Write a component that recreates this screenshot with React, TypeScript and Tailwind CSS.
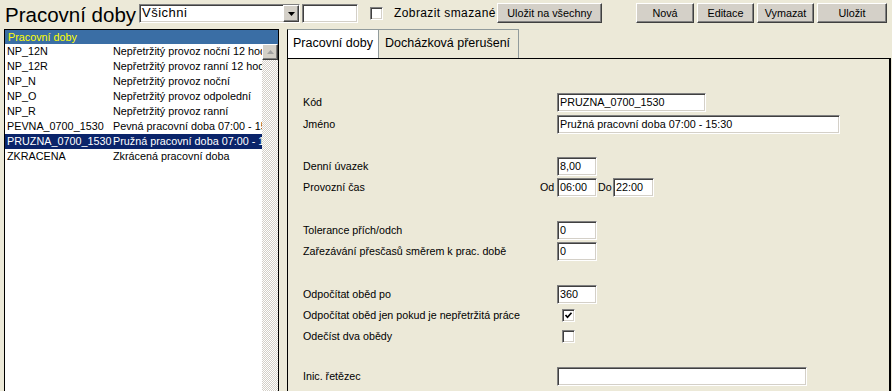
import React from "react";

const sunken =
  "border border-t-[#808080] border-l-[#808080] border-r-white border-b-white shadow-[inset_1px_1px_0_#404040,inset_-1px_-1px_0_#d4d0c8] bg-white";
const raised =
  "border border-t-white border-l-white border-r-[#404040] border-b-[#404040] shadow-[inset_-1px_-1px_0_#808080] bg-[#d4d0c8]";

function Input({ w, value = "", h = "h-[19px]" }: { w: string; value?: string; h?: string }) {
  return (
    <div className={`${sunken} ${w} ${h} pl-[2px] text-[10.8px] leading-[16px] whitespace-nowrap overflow-hidden text-black`}>
      {value}
    </div>
  );
}

function Check({ checked }: { checked?: boolean }) {
  return (
    <div className={`${sunken} w-[13px] h-[13px] flex items-center justify-center`}>
      {checked && (
        <svg width="9" height="9" viewBox="0 0 9 9">
          <polyline points="1.5,4 3.5,6.2 7.5,1.8" fill="none" stroke="#000" strokeWidth="1.7" />
        </svg>
      )}
    </div>
  );
}

function Btn({ w, label }: { w: string; label: string }) {
  return (
    <div className={`${raised} ${w} h-[20px] mt-[3px] flex items-center justify-center text-[10.8px] text-black whitespace-nowrap`}>
      {label}
    </div>
  );
}

const rows: [string, string][] = [
  ["NP_12N", "Nepřetržitý provoz noční 12 hodin"],
  ["NP_12R", "Nepřetržitý provoz ranní 12 hodin"],
  ["NP_N", "Nepřetržitý provoz noční"],
  ["NP_O", "Nepřetržitý provoz odpolední"],
  ["NP_R", "Nepřetržitý provoz ranní"],
  ["PEVNA_0700_1530", "Pevná pracovní doba 07:00 - 15:30"],
  ["PRUZNA_0700_1530", "Pružná pracovní doba 07:00 - 15:30"],
  ["ZKRACENA", "Zkrácená pracovní doba"],
];

function Row({ label, children, className = "" }: { label: string; children?: React.ReactNode; className?: string }) {
  return (
    <div className={`flex items-center h-[21px] ${className}`}>
      <div className="w-[254px] text-[10.7px] whitespace-nowrap">{label}</div>
      {children}
    </div>
  );
}

export default function App() {
  return (
    <div className="w-[892px] h-[391px] bg-[#ECE9D8] overflow-hidden font-['Liberation_Sans',Arial,sans-serif] text-black">
      {/* top bar */}
      <div className="flex items-start h-[29px]">
        <div className="ml-[5px] mt-[5px] w-[134px] text-[20.5px] leading-none whitespace-nowrap">Pracovní doby</div>
        <div className={`${sunken} w-[161px] h-[19px] mt-[4px] flex items-stretch`}>
          <div className="flex-1 pl-[2px] text-[13px] tracking-[0.5px] leading-[15px] whitespace-nowrap">Všichni</div>
          <div className={`${raised} w-[16px] flex items-center justify-center`}>
            <svg width="7" height="4" viewBox="0 0 7 4">
              <polygon points="0,0 7,0 3.5,4" fill="#000" />
            </svg>
          </div>
        </div>
        <div className={`${sunken} ml-[2px] w-[56px] h-[19px] mt-[4px]`} />
        <div className="ml-[12px] mt-[7px]">
          <Check />
        </div>
        <div className="ml-[11px] mt-[6px] w-[103px] text-[12px] tracking-[0.4px] leading-[15px] whitespace-nowrap">
          Zobrazit smazané
        </div>
        <Btn w="w-[105px]" label="Uložit na všechny" />
        <div className="ml-[34px]">
          <Btn w="w-[58px]" label="Nová" />
        </div>
        <div className="ml-[3px]">
          <Btn w="w-[57px]" label="Editace" />
        </div>
        <div className="ml-[3px]">
          <Btn w="w-[57px]" label="Vymazat" />
        </div>
        <div className="ml-[3px]">
          <Btn w="w-[70px]" label="Uložit" />
        </div>
      </div>

      {/* main */}
      <div className="flex pl-[4px]">
        {/* list */}
        <div className="w-[275px] h-[400px] border-l border-t border-r border-black bg-white flex flex-col">
          <div className="h-[14px] bg-[#3A6EA5] text-[#FFFF00] pl-[3px] text-[10.8px] leading-[14px]">Pracovní doby</div>
          <div className="flex flex-1">
            <div className="w-[257px] flex flex-col">
              {rows.map(([code, name], i) => {
                const sel = i === 6;
                return (
                  <div
                    key={code}
                    className={`flex h-[15px] text-[10.8px] leading-[15px] whitespace-nowrap overflow-hidden ${
                      sel ? "bg-[#0A246A] text-white" : ""
                    }`}
                  >
                    <div className="w-[108px] pl-[2px] shrink-0">{code}</div>
                    <div>{name}</div>
                  </div>
                );
              })}
            </div>
            <div className="w-[16px] flex flex-col bg-[repeating-conic-gradient(#d4d0c8_0_25%,#ffffff_0_50%)] bg-[length:2px_2px]">
              <div className={`${raised} h-[16px] flex items-center justify-center`}>
                <svg width="7" height="4" viewBox="0 0 7 4">
                  <polygon points="3.5,0 7,4 0,4" fill="#a0a0a0" />
                </svg>
              </div>
            </div>
          </div>
        </div>

        {/* tabs panel */}
        <div className="ml-[8px] w-[604px] flex flex-col">
          <div className="flex h-[29px]">
            <div className="w-[92px] h-[29px] bg-white border-l border-l-black border-t border-t-[#919b9c] border-r border-r-[#919b9c] pl-[5px] text-[12.5px] leading-[27px] whitespace-nowrap">
              Pracovní doby
            </div>
            <div className="w-[140px] h-[29px] border-t border-t-[#919b9c] border-r border-r-[#919b9c] pl-[6px] text-[12.5px] leading-[27px] whitespace-nowrap">
              Docházková přerušení
            </div>
          </div>
          <div className="h-[400px] border-t border-l border-black border-r-2 border-r-black pl-[15px] flex flex-col">
            <Row label="Kód" className="mt-[33px]">
              <Input w="w-[149px]" value="PRUZNA_0700_1530" />
            </Row>
            <Row label="Jméno" className="mt-[1px]">
              <Input w="w-[283px]" value="Pružná pracovní doba 07:00 - 15:30" />
            </Row>
            <Row label="Denní úvazek" className="mt-[21px]">
              <Input w="w-[40px]" value="8,00" />
            </Row>
            <div className="flex items-center h-[21px]">
              <div className="w-[237px] text-[10.7px] whitespace-nowrap">Provozní čas</div>
              <div className="w-[17px] text-[10.7px]">Od</div>
              <Input w="w-[40px]" value="06:00" />
              <div className="ml-[1px] w-[15px] text-[10.7px]">Do</div>
              <Input w="w-[41px]" value="22:00" />
            </div>
            <Row label="Tolerance přích/odch" className="mt-[22px]">
              <Input w="w-[40px]" value="0" />
            </Row>
            <Row label="Zařezávání přesčasů směrem k prac. době">
              <Input w="w-[40px]" value="0" />
            </Row>
            <Row label="Odpočítat oběd po" className="mt-[22px]">
              <Input w="w-[40px]" value="360" />
            </Row>
            <Row label="Odpočítat oběd jen pokud je nepřetržitá práce">
              <div className="ml-[5px]">
                <Check checked />
              </div>
            </Row>
            <Row label="Odečíst dva obědy">
              <div className="ml-[5px]">
                <Check />
              </div>
            </Row>
            <Row label="Inic. řetězec" className="mt-[19px]">
              <Input w="w-[250px]" />
            </Row>
          </div>
        </div>
      </div>
    </div>
  );
}
